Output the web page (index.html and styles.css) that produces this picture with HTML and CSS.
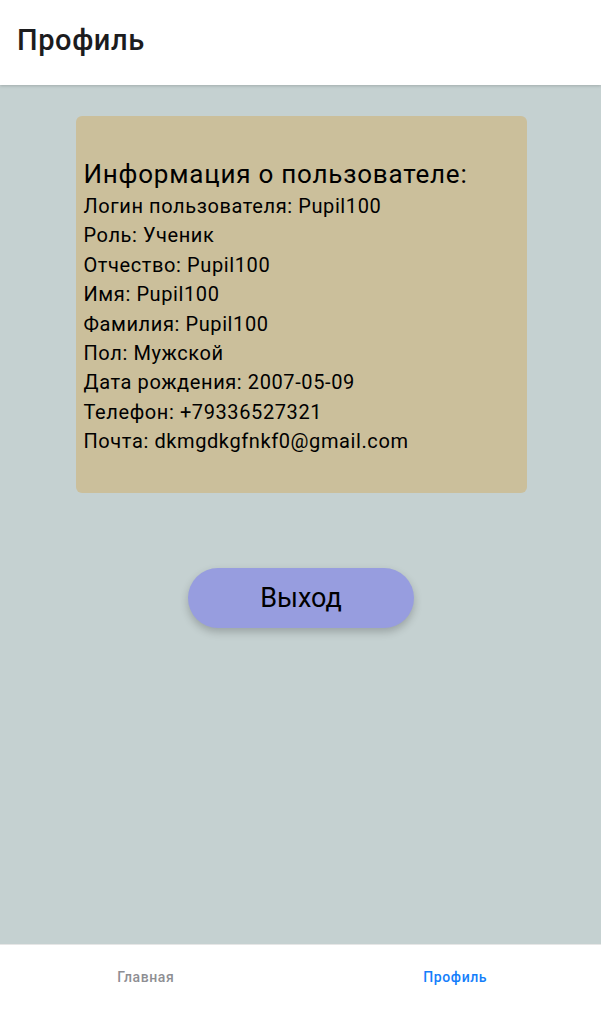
FILE: index.html
```html
<!DOCTYPE html>
<html lang="ru">
<head>
<meta charset="utf-8">
<link rel="stylesheet" href="styles.css">
</head>
<body>
<div class="app">
  <header class="header"><h1 class="title">Профиль</h1></header>
  <main class="content">
    <section class="card">
      <div class="card-title">Информация о пользователе:</div>
      <div class="row">Логин пользователя: Pupil100</div>
      <div class="row">Роль: Ученик</div>
      <div class="row">Отчество: Pupil100</div>
      <div class="row">Имя: Pupil100</div>
      <div class="row">Фамилия: Pupil100</div>
      <div class="row">Пол: Мужской</div>
      <div class="row">Дата рождения: 2007-05-09</div>
      <div class="row">Телефон: +79336527321</div>
      <div class="row">Почта: dkmgdkgfnkf0@gmail.com</div>
    </section>
    <button class="logout">Выход</button>
  </main>
  <nav class="tabbar">
    <div class="tab tab-home">Главная</div>
    <div class="tab tab-profile active">Профиль</div>
  </nav>
</div>
</body>
</html>
```
FILE: styles.css
```css
* { box-sizing: border-box; }
html, body { margin: 0; padding: 0; height: 100%; }
body { font-family: Roboto, "Noto Sans", sans-serif; background: #c5d1d1; color: #000; }
.app { display: flex; flex-direction: column; height: 1011px; }
.header {
  height: 85px; background: #fff; display: flex; align-items: center;
  padding-left: 17px; box-shadow: 0 1px 3px rgba(0,0,0,0.18); position: relative; z-index: 1;
}
.title { margin: 0; font-size: 29px; font-weight: 500; color: #1c1c1e; line-height: 1; padding-bottom: 4px; letter-spacing: 0.6px; }
.content { flex: 1; display: flex; flex-direction: column; align-items: center; }
.card {
  margin-top: 31px; width: 451px; margin-left: 1px; background: #cbbf9b; border-radius: 6px;
  padding: 43px 8px 36px 8px;
}
.card-title { font-size: 26px; line-height: 30px; margin-bottom: 3px; letter-spacing: 0.03em; }
.row { font-size: 20px; line-height: 29.4px; letter-spacing: 0.03em; }
.logout {
  margin-top: 75px; width: 226px; height: 60px; border: none; border-radius: 30px;
  background: #979ddf; font-family: Roboto, sans-serif; font-size: 27px; color: #000;
  box-shadow: 0 4px 8px rgba(0,0,0,0.22); margin-left: 1px;
}
.tabbar {
  height: 67px; background: #fff; display: flex; border-top: 1px solid #e6e6e6;
}
.tab { flex: 1; display: flex; align-items: center; justify-content: center; font-size: 14px; font-weight: 500; color: #8e8e93; padding-bottom: 2px; letter-spacing: 0.6px; }
.tab-home { padding-right: 6px; }
.tab-profile { padding-left: 12px; }
.tab.active { color: #147efb; }
```
